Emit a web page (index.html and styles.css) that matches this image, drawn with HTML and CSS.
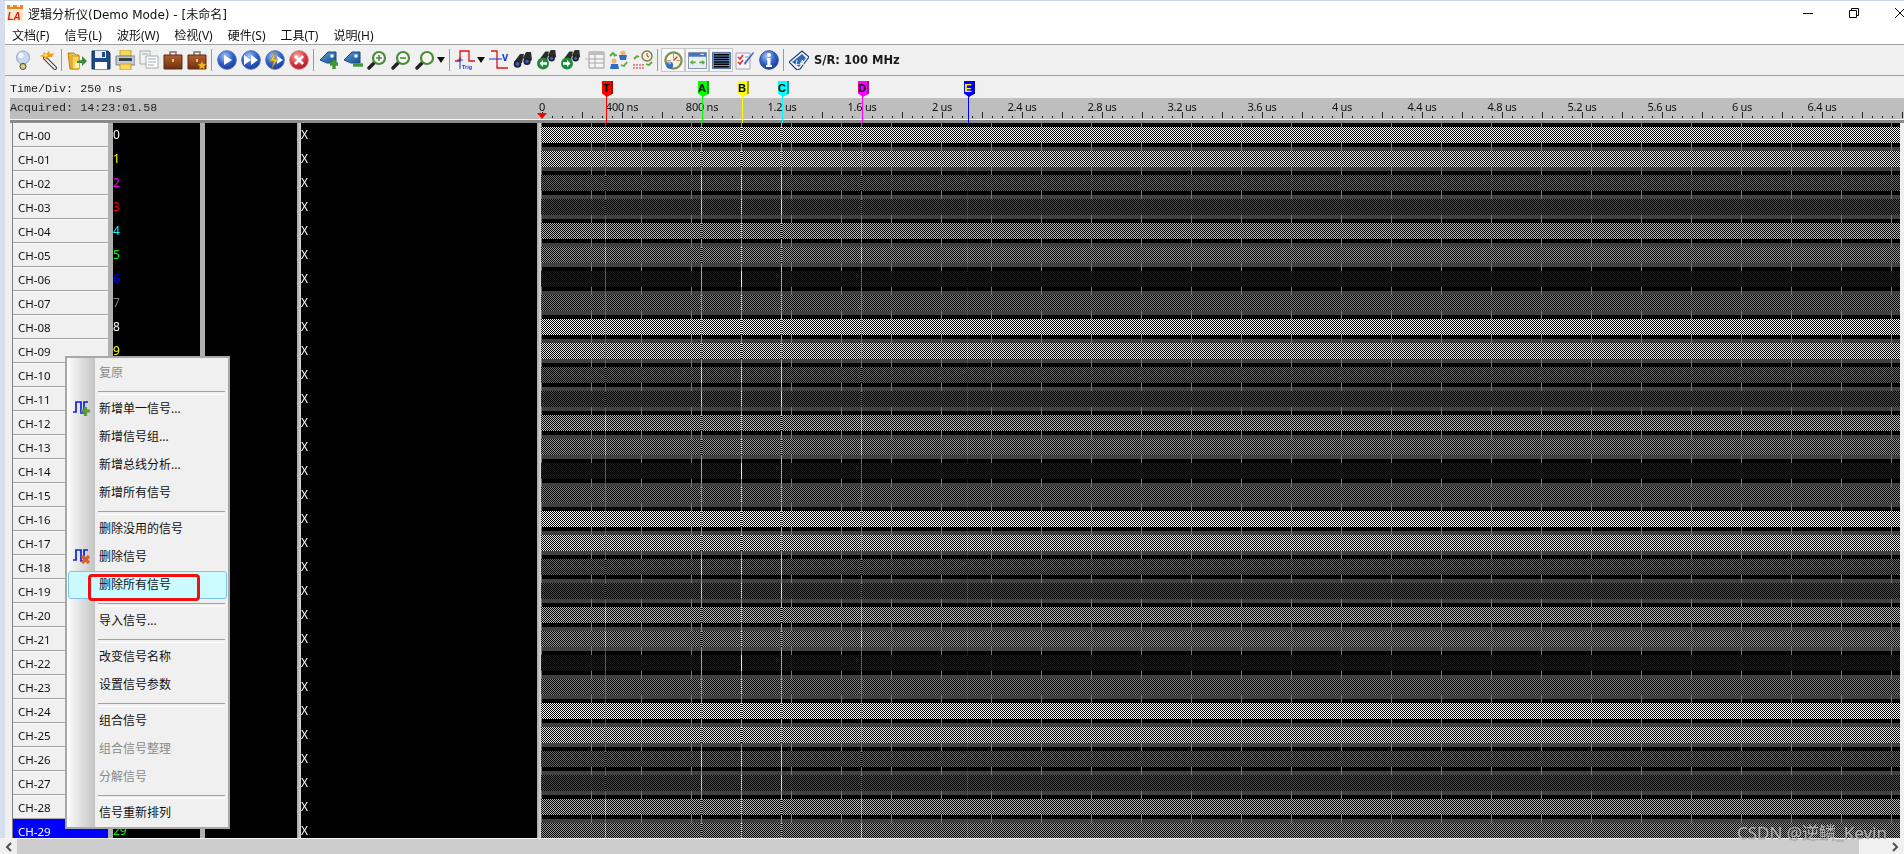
FILE: index.html
```html
<!DOCTYPE html>
<html lang="zh-CN">
<head>
<meta charset="utf-8">
<title>逻辑分析仪</title>
<link rel="stylesheet" href="styles.css">
</head>
<body>
<svg class="defs" width="0" height="0" aria-hidden="true">
  <defs>
    <radialGradient id="gBlue" cx="40%" cy="30%" r="75%"><stop offset="0" stop-color="#a9c8f5"/><stop offset=".55" stop-color="#2f62c9"/><stop offset="1" stop-color="#16358f"/></radialGradient>
    <radialGradient id="gRed" cx="40%" cy="30%" r="75%"><stop offset="0" stop-color="#f4b4b4"/><stop offset=".6" stop-color="#d8333c"/><stop offset="1" stop-color="#9c1d24"/></radialGradient>
    <linearGradient id="gBrown" x1="0" y1="0" x2="0" y2="1"><stop offset="0" stop-color="#b5602f"/><stop offset="1" stop-color="#6d3012"/></linearGradient>
    <linearGradient id="gFolder" x1="0" y1="0" x2="1" y2="0"><stop offset="0" stop-color="#e8a818"/><stop offset="1" stop-color="#ffe27a"/></linearGradient>
    <linearGradient id="gTag" x1="0" y1="0" x2="1" y2="1"><stop offset="0" stop-color="#5f9bd8"/><stop offset="1" stop-color="#14508f"/></linearGradient>

    <symbol id="i-logo" viewBox="0 0 16 16"><rect width="16" height="16" fill="#f6e7c8"/><path d="M0 0h3v2h3V0h4v2h3V0h3v4H0z" fill="#e8862a"/><text x="0.5" y="14.5" class="logo-text">LA</text></symbol>
    <symbol id="i-bulb" viewBox="0 0 20 20"><circle cx="10" cy="7.5" r="6.5" fill="#c8d8ee" stroke="#8fa6c6"/><circle cx="8" cy="5.5" r="2.6" fill="#f4f8ff"/><path d="M7.5 13h5v3h-5z" fill="#b9ad72"/><circle cx="10" cy="16.5" r="3" fill="#d8cf8f" stroke="#4a4528"/></symbol>
    <symbol id="i-wand" viewBox="0 0 20 20"><path d="M8 8l10 10" stroke="#444" stroke-width="4" stroke-linecap="round"/><path d="M8 8l10 10" stroke="#f0f0f0" stroke-width="2" stroke-linecap="round"/><path d="M2 6l4-1 1-3 2 2 3-3 1 3 4-1-2 4-4 0-2 3-2-3z" fill="#f39a1d"/><path d="M6 5l3-1 2 1-2 2z" fill="#ffe070"/></symbol>
    <symbol id="i-folder" viewBox="0 0 20 20"><path d="M1 3h6l2 2h3v14H3z" fill="url(#gFolder)" stroke="#b98310"/><path d="M5 6h7v13H5z" fill="#ffd45e" stroke="#c89a1d"/><path d="M10 11l5-1V6l5 5-5 5v-3h-5z" fill="#3f8a3a"/><path d="M8 13h4v5H8z" fill="#fff2b0"/></symbol>
    <symbol id="i-save" viewBox="0 0 20 20"><path d="M1 1h16l2 2v16H1z" fill="#1f4a86" stroke="#12305c"/><path d="M4 1h11v7H4z" fill="#e8eef6"/><path d="M11 2h3v5h-3z" fill="#1f4a86"/><path d="M4 12h12v7H4z" fill="#fff"/></symbol>
    <symbol id="i-print" viewBox="0 0 20 20"><path d="M5 0h11v6H5z" fill="#f6d860" stroke="#c8a22c"/><path d="M1 6h19v9H1z" fill="#c4c8cf" stroke="#7d828a"/><path d="M4 8h13v3H4z" fill="#3b3f46"/><path d="M5 14h11v6H5z" fill="#f6d860" stroke="#c8a22c"/></symbol>
    <symbol id="i-copy" viewBox="0 0 20 20"><path d="M1 1h10v13H1z" fill="#f2f2f2" stroke="#a8a8a8"/><path d="M7 6h12v12H7z" fill="#fff" stroke="#a8a8a8"/><path d="M9 9h8M9 12h8M9 15h6M3 4h6" stroke="#9aa8bc"/></symbol>
    <symbol id="i-case" viewBox="0 0 20 20"><path d="M7 5V2h6v3" fill="none" stroke="#777" stroke-width="1.5"/><path d="M1 5h18v14H1z" fill="url(#gBrown)" stroke="#5b2a10"/><path d="M9 9h2v3H9z" fill="#e8c070"/></symbol>
    <symbol id="i-casestar" viewBox="0 0 20 20"><use href="#i-case" width="20" height="20"/><path d="M15 11l1.3 2.8 3 .4-2.2 2 .6 3-2.7-1.5-2.700 1.500.6-3-2.200-2 3-.4z" fill="#f5b21a" stroke="#b97c08" stroke-width=".4"/></symbol>
    <symbol id="i-play" viewBox="0 0 20 20"><circle cx="10" cy="10" r="9.300" fill="url(#gBlue)" stroke="#4a70bd"/><path d="M7 5l8 5-8 5z" fill="#fff"/></symbol>
    <symbol id="i-ff" viewBox="0 0 20 20"><circle cx="10" cy="10" r="9.300" fill="url(#gBlue)" stroke="#4a70bd"/><path d="M3 5l7 5-7 5zM10 5l7 5-7 5z" fill="#fff"/></symbol>
    <symbol id="i-bolt" viewBox="0 0 20 20"><circle cx="10" cy="10" r="9.300" fill="url(#gBlue)" stroke="#4a70bd"/><path d="M12 6l6 4-6 4z" fill="#fff"/><path d="M10 2L5 11h4l-2 7 6-9H9z" fill="#f5c518" stroke="#a87c05" stroke-width=".5"/></symbol>
    <symbol id="i-stop" viewBox="0 0 20 20"><circle cx="10" cy="10" r="9.300" fill="url(#gRed)" stroke="#c77"/><path d="M6 6l8 8M14 6l-8 8" stroke="#fff" stroke-width="2.800"/></symbol>
    <symbol id="i-tagplus" viewBox="0 0 20 20"><path d="M1 10L9 2h8v11H8z" fill="url(#gTag)" stroke="#124a84"/><circle cx="13" cy="6" r="1.800" fill="#fff"/><path d="M11 14h8M15 10v9" stroke="#3f9a36" stroke-width="3.400"/></symbol>
    <symbol id="i-tagminus" viewBox="0 0 20 20"><path d="M1 10L9 2h8v11H8z" fill="url(#gTag)" stroke="#124a84"/><circle cx="13" cy="6" r="1.800" fill="#fff"/><path d="M10 15h10" stroke="#3f9a36" stroke-width="3.400"/></symbol>
    <symbol id="i-zplus" viewBox="0 0 20 20"><path d="M2 18l6-6" stroke="#222" stroke-width="3.400" stroke-linecap="round"/><circle cx="12" cy="8" r="6" fill="#f6f8f4" stroke="#4d8a3d" stroke-width="2.200"/><path d="M9 8h6M12 5v6" stroke="#4d8a3d" stroke-width="1.600"/></symbol>
    <symbol id="i-zminus" viewBox="0 0 20 20"><path d="M2 18l6-6" stroke="#222" stroke-width="3.400" stroke-linecap="round"/><circle cx="12" cy="8" r="6" fill="#f6f8f4" stroke="#4d8a3d" stroke-width="2.200"/><path d="M9 8h6" stroke="#4d8a3d" stroke-width="1.600"/></symbol>
    <symbol id="i-zfit" viewBox="0 0 20 20"><path d="M2 18l6-6" stroke="#222" stroke-width="3.400" stroke-linecap="round"/><circle cx="12" cy="8" r="6" fill="#f6f8f4" stroke="#4d8a3d" stroke-width="2.200"/></symbol>
    <symbol id="i-down" viewBox="0 0 8 6"><path d="M0 0h8L4 6z" fill="#111"/></symbol>
    <symbol id="i-trig" viewBox="0 0 20 20"><path d="M0 11h5V1h9v10h6" fill="none" stroke="#e81010" stroke-width="1.300"/><path d="M5 7v12M2 10h6" stroke="#1a30e0"/><text x="7" y="19" class="trig-text">Trig</text></symbol>
    <symbol id="i-trigv" viewBox="0 0 20 20"><path d="M2 1h6v17h11" fill="none" stroke="#e81010" stroke-width="1.300"/><path d="M0 9h13" stroke="#1a30e0"/><text x="13" y="11" class="trigv-text">V</text></symbol>
    <symbol id="i-binoc" viewBox="0 0 20 20"><path d="M1 12L7 4h4l-2 9z" fill="#2b2b2b"/><path d="M10 8l3-6h5l1 8-5 3z" fill="#2b2b2b"/><ellipse cx="4.500" cy="14" rx="3.800" ry="3.800" fill="#222"/><ellipse cx="14" cy="11.500" rx="3.600" ry="3.600" fill="#222"/><ellipse cx="4.500" cy="14" rx="2" ry="2" fill="#2d62c4"/><ellipse cx="14" cy="11.500" rx="1.800" ry="1.800" fill="#2d62c4"/></symbol>
    <symbol id="i-binl" viewBox="0 0 20 20"><use href="#i-binoc" x="2" y="-2" width="18" height="18"/><circle cx="6" cy="13.500" r="6" fill="#1f8a3c"/><path d="M2.500 13.500l3.500-3.500v2.200h4v2.600H6V17z" fill="#fff"/></symbol>
    <symbol id="i-binr" viewBox="0 0 20 20"><use href="#i-binoc" x="2" y="-2" width="18" height="18"/><circle cx="6" cy="13.500" r="6" fill="#1f8a3c"/><path d="M9.500 13.500L6 10v2.200H2v2.600h4V17z" fill="#fff"/></symbol>
    <symbol id="i-table" viewBox="0 0 20 20"><path d="M4 2h15v16H4z" fill="#f4f4f4" stroke="#9a9a9a"/><path d="M4 2h15v3H4z" fill="#bdbdbd"/><path d="M4 9h15M4 13h15M10 5v13" stroke="#a8a8a8"/><path d="M0 9h3" stroke="#b8b8b8"/></symbol>
    <symbol id="i-people" viewBox="0 0 20 20"><circle cx="14" cy="3" r="2.600" fill="#efb27a"/><path d="M10 5h8l-1 5h-6z" fill="#2f6cc4"/><circle cx="5" cy="11" r="2.600" fill="#efb27a"/><path d="M1 19l1-5h7l1 5z" fill="#2f6cc4"/><path d="M1 6l3-3 2 2-1 1 3-1M12 15l3 1 3-4" fill="none" stroke="#5aa63a" stroke-width="1.800"/></symbol>
    <symbol id="i-clock" viewBox="0 0 20 20"><circle cx="14" cy="6" r="5" fill="#f4efdc" stroke="#7d7a45" stroke-width="1.400"/><path d="M14 3v3l2 1" stroke="#b33" fill="none"/><path d="M1 9l3-3 2 1M13 14l3 1 3-3" fill="none" stroke="#5aa63a" stroke-width="1.800"/><path d="M0 15h11M0 18h11" stroke="#d22" stroke-dasharray="2 1" stroke-width="1.200"/></symbol>
    <symbol id="i-compass" viewBox="0 0 20 20"><circle cx="10" cy="10" r="8.500" fill="#f5f3e4" stroke="#7e8f54" stroke-width="2.400"/><path d="M10 3v5M3 10h4M13 10h4" stroke="#c84"/><path d="M10 10l4-4" stroke="#c33" stroke-width="1.400"/><circle cx="6" cy="15" r="3.600" fill="#2f6cc4"/><circle cx="6" cy="12.800" r="1.400" fill="#8fbcf0"/></symbol>
    <symbol id="i-win" viewBox="0 0 20 20"><path d="M.5 1.500h19v17H.5z" fill="#e8eef0" stroke="#7d8ea8"/><path d="M1 2h18v4H1z" fill="#4a6fc8"/><path d="M13 3.500h4" stroke="#fff"/><path d="M2 12l3-2.500v1.500h3v2H5v1.500zM18 12l-3-2.500v1.500h-3v2h3v1.500z" fill="#5aa63a"/></symbol>
    <symbol id="i-lines" viewBox="0 0 20 20"><path d="M.5 1.500h19v17H.5z" fill="#6d92c8" stroke="#4a6fa8"/><path d="M2 4h16M2 6.500h16M2 9h16M2 11.500h16M2 14h16M2 16.500h16" stroke="#000" stroke-width="1.500"/></symbol>
    <symbol id="i-check" viewBox="0 0 20 20"><path d="M1 3h14v16H1z" fill="#f4f4f8" stroke="#a4a4b4"/><path d="M3 7l2 2 3-4M3 12l2 2 3-4" fill="none" stroke="#d8302c" stroke-width="1.600"/><path d="M9 13L18 2l1 1L10 15z" fill="#3f66c4"/><path d="M10 7h4M10 11h2" stroke="#8894b4"/></symbol>
    <symbol id="i-info" viewBox="0 0 20 20"><circle cx="10" cy="10" r="9.300" fill="url(#gBlue)" stroke="#2a4aa0"/><circle cx="10" cy="5" r="2" fill="#fff"/><path d="M8 8h3.500v7H13v2H7v-2h1.300v-5H8z" fill="#fff"/></symbol>
    <symbol id="i-card" viewBox="0 0 20 20"><path d="M0 12L13 1l7 6-9 12-3 1z" fill="#f4f8fc" stroke="#1f3f74" stroke-width="1.200"/><path d="M3 12L13 4l4 4-7 9z" fill="#2d68b8"/><text x="6.500" y="14.500" class="card-text">LA</text></symbol>
    <symbol id="i-addsig" viewBox="0 0 18 16"><path d="M0 12h3V2h5v11h3V2h4" fill="none" stroke="#1020d8" stroke-width="1.700"/><path d="M8 11h9M12.500 7v9" stroke="#5a9a3c" stroke-width="3.200"/></symbol>
    <symbol id="i-delsig" viewBox="0 0 18 16"><path d="M0 12h3V2h5v11h3V2h4" fill="none" stroke="#1020d8" stroke-width="1.700"/><path d="M9 8l7 7M16 8l-7 7" stroke="#d8602c" stroke-width="3.200"/></symbol>
  </defs>
</svg>

<div class="frame">
  <header class="titlebar">
    <svg class="logo"><use href="#i-logo"/></svg>
    <span class="title">逻辑分析仪(Demo Mode) - [未命名]</span>
    <div class="win-btns">
      <svg class="win-btn" viewBox="0 0 10 10"><path d="M0 5.500h10" stroke="#000"/></svg>
      <svg class="win-btn" viewBox="0 0 10 10"><path d="M.5 2.500h7v7h-7zM2.500 2.500v-2h7v7h-2" fill="none" stroke="#000"/></svg>
      <svg class="win-btn" viewBox="0 0 10 10"><path d="M0 0l10 10M10 0L0 10" stroke="#000"/></svg>
    </div>
  </header>
  <nav class="menubar">
    <span>文档(F)</span><span>信号(L)</span><span>波形(W)</span><span>检视(V)</span><span>硬件(S)</span><span>工具(T)</span><span>说明(H)</span>
  </nav>
  <div class="toolbar">
    <span class="tool"><svg><use href="#i-bulb"/></svg></span>
    <span class="tool"><svg><use href="#i-wand"/></svg></span>
    <span class="sep"></span>
    <span class="tool"><svg><use href="#i-folder"/></svg></span>
    <span class="tool"><svg><use href="#i-save"/></svg></span>
    <span class="tool"><svg><use href="#i-print"/></svg></span>
    <span class="tool"><svg><use href="#i-copy"/></svg></span>
    <span class="tool"><svg><use href="#i-case"/></svg></span>
    <span class="tool"><svg><use href="#i-casestar"/></svg></span>
    <span class="sep"></span>
    <span class="tool"><svg><use href="#i-play"/></svg></span>
    <span class="tool"><svg><use href="#i-ff"/></svg></span>
    <span class="tool"><svg><use href="#i-bolt"/></svg></span>
    <span class="tool"><svg><use href="#i-stop"/></svg></span>
    <span class="sep"></span>
    <span class="tool"><svg><use href="#i-tagplus"/></svg></span>
    <span class="tool"><svg><use href="#i-tagminus"/></svg></span>
    <span class="tool"><svg><use href="#i-zplus"/></svg></span>
    <span class="tool"><svg><use href="#i-zminus"/></svg></span>
    <span class="tool"><svg><use href="#i-zfit"/></svg></span>
    <span class="drop"><svg><use href="#i-down"/></svg></span>
    <span class="sep"></span>
    <span class="tool"><svg><use href="#i-trig"/></svg></span>
    <span class="drop"><svg><use href="#i-down"/></svg></span>
    <span class="tool"><svg><use href="#i-trigv"/></svg></span>
    <span class="tool"><svg><use href="#i-binoc"/></svg></span>
    <span class="tool"><svg><use href="#i-binl"/></svg></span>
    <span class="tool"><svg><use href="#i-binr"/></svg></span>
    <span class="tool"><svg><use href="#i-table"/></svg></span>
    <span class="tool"><svg><use href="#i-people"/></svg></span>
    <span class="tool"><svg><use href="#i-clock"/></svg></span>
    <span class="sep"></span>
    <span class="tool on"><svg><use href="#i-compass"/></svg></span>
    <span class="tool on"><svg><use href="#i-win"/></svg></span>
    <span class="tool on"><svg><use href="#i-lines"/></svg></span>
    <span class="tool"><svg><use href="#i-check"/></svg></span>
    <span class="tool"><svg><use href="#i-info"/></svg></span>
    <span class="sep"></span>
    <span class="tool"><svg><use href="#i-card"/></svg></span>
    <span class="rate">S/R: 100 MHz</span>
  </div>
  <div class="timebar">Time/Div: 250 ns</div>
  <div class="rulerbar">
    <div class="acquired">Acquired: 14:23:01.58</div>
    <div class="scale">
      <span>0</span><span>400 ns</span><span>800 ns</span><span>1.2 us</span><span>1.6 us</span><span>2 us</span><span>2.4 us</span><span>2.8 us</span><span>3.2 us</span><span>3.6 us</span><span>4 us</span><span>4.4 us</span><span>4.8 us</span><span>5.2 us</span><span>5.6 us</span><span>6 us</span><span>6.4 us</span>
    </div>
    <div class="ticks"></div>
    <div class="origin"></div>
  </div>
  <div class="ruler-edge"></div>
  <main class="panes">
    <div class="names">
      <div class="name">CH-00</div><div class="name">CH-01</div><div class="name">CH-02</div><div class="name">CH-03</div><div class="name">CH-04</div><div class="name">CH-05</div><div class="name">CH-06</div><div class="name">CH-07</div><div class="name">CH-08</div><div class="name">CH-09</div>
      <div class="name">CH-10</div><div class="name">CH-11</div><div class="name">CH-12</div><div class="name">CH-13</div><div class="name">CH-14</div><div class="name">CH-15</div><div class="name">CH-16</div><div class="name">CH-17</div><div class="name">CH-18</div><div class="name">CH-19</div>
      <div class="name">CH-20</div><div class="name">CH-21</div><div class="name">CH-22</div><div class="name">CH-23</div><div class="name">CH-24</div><div class="name">CH-25</div><div class="name">CH-26</div><div class="name">CH-27</div><div class="name">CH-28</div><div class="name selected">CH-29</div>
    </div>
    <div class="splitter"></div>
    <div class="col col-num">
      <div class="c0">0</div><div class="c1">1</div><div class="c2">2</div><div class="c3">3</div><div class="c4">4</div><div class="c5">5</div><div class="c6">6</div><div class="c7">7</div>
      <div class="c0">8</div><div class="c1">9</div><div class="c2">10</div><div class="c3">11</div><div class="c4">12</div><div class="c5">13</div><div class="c6">14</div><div class="c7">15</div>
      <div class="c0">16</div><div class="c1">17</div><div class="c2">18</div><div class="c3">19</div><div class="c4">20</div><div class="c5">21</div><div class="c6">22</div><div class="c7">23</div>
      <div class="c0">24</div><div class="c1">25</div><div class="c2">26</div><div class="c3">27</div><div class="c4">28</div><div class="c5">29</div>
    </div>
    <div class="splitter"></div>
    <div class="col col-blank"></div>
    <div class="splitter thin"></div>
    <div class="col col-x">
      <div>X</div><div>X</div><div>X</div><div>X</div><div>X</div><div>X</div><div>X</div><div>X</div><div>X</div><div>X</div>
      <div>X</div><div>X</div><div>X</div><div>X</div><div>X</div><div>X</div><div>X</div><div>X</div><div>X</div><div>X</div>
      <div>X</div><div>X</div><div>X</div><div>X</div><div>X</div><div>X</div><div>X</div><div>X</div><div>X</div><div>X</div>
    </div>
    <div class="splitter thin"></div>
    <div class="waves">
      <div class="band c0"></div><div class="band c1"></div><div class="band c2"></div><div class="band c3"></div><div class="band c4"></div><div class="band c5"></div><div class="band c6"></div><div class="band c7"></div>
      <div class="band c0"></div><div class="band c1"></div><div class="band c2"></div><div class="band c3"></div><div class="band c4"></div><div class="band c5"></div><div class="band c6"></div><div class="band c7"></div>
      <div class="band c0"></div><div class="band c1"></div><div class="band c2"></div><div class="band c3"></div><div class="band c4"></div><div class="band c5"></div><div class="band c6"></div><div class="band c7"></div>
      <div class="band c0"></div><div class="band c1"></div><div class="band c2"></div><div class="band c3"></div><div class="band c4"></div><div class="band c5"></div>
      <i class="cursor cur-t"></i><i class="cursor cur-a"></i><i class="cursor cur-b"></i><i class="cursor cur-c"></i><i class="cursor cur-d"></i><i class="cursor cur-e"></i>
    </div>
    <div class="edge"></div>
  </main>
</div>
<div class="scrollbar">
  <span class="sb-btn"><svg viewBox="0 0 8 10"><path d="M6 1L2 5l4 4" fill="none" stroke="#505050" stroke-width="2"/></svg></span>
  <span class="sb-track"></span>
  <span class="sb-btn right"><svg viewBox="0 0 8 10"><path d="M2 1l4 4-4 4" fill="none" stroke="#505050" stroke-width="2"/></svg></span>
</div>

<i class="stem s-t"></i><i class="stem s-a"></i><i class="stem s-b"></i><i class="stem s-c"></i><i class="stem s-d"></i><i class="stem s-e"></i>
<div class="flag f-t">T</div><div class="flag f-a">A</div><div class="flag f-b">B</div><div class="flag f-c">C</div><div class="flag f-d">D</div><div class="flag f-e">E</div>

<div class="menu">
  <div class="item off"><span class="slot"></span>复原</div>
  <div class="msep"></div>
  <div class="item"><span class="slot"><svg><use href="#i-addsig"/></svg></span>新增单一信号...</div>
  <div class="item"><span class="slot"></span>新增信号组...</div>
  <div class="item"><span class="slot"></span>新增总线分析...</div>
  <div class="item"><span class="slot"></span>新增所有信号</div>
  <div class="msep"></div>
  <div class="item"><span class="slot"></span>删除没用的信号</div>
  <div class="item"><span class="slot"><svg><use href="#i-delsig"/></svg></span>删除信号</div>
  <div class="item hot"><span class="slot"></span>删除所有信号</div>
  <div class="msep"></div>
  <div class="item"><span class="slot"></span>导入信号...</div>
  <div class="msep"></div>
  <div class="item"><span class="slot"></span>改变信号名称</div>
  <div class="item"><span class="slot"></span>设置信号参数</div>
  <div class="msep"></div>
  <div class="item"><span class="slot"></span>组合信号</div>
  <div class="item off"><span class="slot"></span>组合信号整理</div>
  <div class="item off"><span class="slot"></span>分解信号</div>
  <div class="msep"></div>
  <div class="item"><span class="slot"></span>信号重新排列</div>
</div>
<div class="redbox"></div>
<div class="watermark">CSDN @逆鳞_Kevin</div>
</body>
</html>
```

FILE: styles.css
```css
* { box-sizing: border-box; }
html, body { margin: 0; height: 100%; }
body {
  position: relative;
  width: 1904px;
  height: 854px;
  overflow: hidden;
  background: #f0f0f0;
  color: #000;
  font: 12px "Noto Sans", "Noto Sans CJK SC", sans-serif;
}
.defs { position: absolute; }
.logo-text { font: italic bold 10px "Liberation Sans", sans-serif; fill: #d8231c; }
.trig-text { font: bold 5.5px "Liberation Sans", sans-serif; fill: #1a30e0; }
.trigv-text { font: bold 8px "DejaVu Sans", sans-serif; fill: #1a30e0; }
.card-text { font: italic bold 6.5px "Liberation Sans", sans-serif; fill: #fff; }

.frame {
  display: flex;
  flex-direction: column;
  height: 838px;
  border-left: 5px solid #d5dfee;
  border-top: 1px solid #c9d5e8;
}
.titlebar {
  display: flex;
  align-items: center;
  height: 24px;
  background: #fff;
  padding-left: 2px;
  flex: none;
}
.logo { width: 16px; height: 16px; margin-right: 5px; }
.title { font: 12px "DejaVu Sans", "Noto Sans CJK SC", sans-serif; color: #111; }
.win-btns { display: flex; margin-left: auto; align-items: center; }
.win-btn { width: 10px; height: 10px; margin-right: 36px; overflow: visible; }
.win-btn:last-child { margin-right: -1px; }
.menubar {
  display: flex;
  gap: 15px;
  height: 19px;
  flex: none;
  align-items: center;
  padding-left: 7px;
  background: #fff;
  font-size: 12px;
  color: #111;
}
.toolbar {
  display: flex;
  align-items: center;
  flex: none;
  height: 32px;
  padding-left: 6px;
  border-top: 1px solid #a0a0a0;
  border-bottom: 1px solid #a0a0a0;
  background: #f0f0f0;
}
.tool { display: flex; align-items: center; justify-content: center; width: 24px; height: 24px; flex: none; }
.tool svg { width: 20px; height: 20px; }
.tool.on { background: #f8f8f8; border: 1px solid #c8c8c8; }
.tool.on svg { width: 19px; height: 19px; }
.drop { display: flex; width: 10px; flex: none; }
.drop svg { width: 8px; height: 6px; }
.sep { position: relative; width: 6px; height: 22px; flex: none; }
.sep::before { content: ""; display: block; width: 1px; height: 22px; margin-left: 2px; background: #9a9a9a; }
.rate { margin-left: 3px; font: bold 11.500px "DejaVu Sans", sans-serif; color: #1a1a1a; white-space: nowrap; }

.timebar {
  flex: none;
  height: 22px;
  padding: 5px 0 0 5px;
  font: 11.700px/16px "Liberation Mono", monospace;
  color: #222;
}
.rulerbar {
  position: relative;
  display: flex;
  flex: none;
  height: 21px;
  margin-left: 5px;
  background: #bebebe;
}
.acquired {
  width: 492px;
  flex: none;
  padding-top: 2px;
  font: 11.700px/16px "Liberation Mono", monospace;
  color: #222;
}
.scale { display: flex; flex: none; }
.scale span { width: 80px; flex: none; text-align: center; font-size: 11px; line-height: 17px; letter-spacing: -.25px; color: #111; white-space: nowrap; }
.ticks {
  position: absolute;
  left: 532px;
  right: 0;
  bottom: 1px;
  height: 6px;
  background:
    repeating-linear-gradient(90deg, #222 0 1px, transparent 1px 40px) 0 0 / 100% 6px no-repeat,
    repeating-linear-gradient(90deg, #222 0 1px, transparent 1px 10px) 0 4px / 100% 2px no-repeat;
}
.origin {
  position: absolute;
  left: 527px;
  bottom: 0;
  width: 0;
  height: 0;
  border: 5.500px solid transparent;
  border-top: 6px solid #f00;
  border-bottom: 0;
}
.ruler-edge {
  flex: none;
  height: 4px;
  margin-left: 5px;
  background: linear-gradient(#f8f8f8 0 1px, #8a8a8a 1px);
}

.panes {
  display: flex;
  flex: 1;
  min-height: 0;
  overflow: hidden;
  padding-left: 7px;
  background: #f0f0f0;
}
.names { width: 96px; flex: none; border-left: 1px solid #808080; }
.name {
  height: 24px;
  padding-left: 5px;
  line-height: 23px;
  font-size: 11.500px;
  color: #111;
  background: #f0f0f0;
  border-bottom: 1px solid #a4a4a4;
  border-top: 1px solid #fafafa;
}
.name.selected { background: #00f; color: #fff; border-color: #00f; }
.splitter { width: 5px; flex: none; background: #b0b0b0; }
.splitter.thin { width: 4px; background: linear-gradient(90deg, #a8a8a8, #d8d8d8); }
.col { flex: none; background: #000; color: #fff; font-size: 12px; line-height: 24px; }
.col-num { width: 87px; }
.col-blank { width: 92px; }
.col-x { width: 236px; }
.col-num .c0 { color: #fff; }
.col-num .c1 { color: #ff0; }
.col-num .c2 { color: #f0f; }
.col-num .c3 { color: #f00; }
.col-num .c4 { color: #0ff; }
.col-num .c5 { color: #0f0; }
.col-num .c6 { color: #00f; }
.col-num .c7 { color: #808080; }

.waves {
  position: relative;
  width: 1359px;
  flex: none;
  padding-top: 4px;
  overflow: hidden;
  background:
    repeating-linear-gradient(90deg, #18a0a0 0 1px, transparent 1px 50px),
    repeating-linear-gradient(#000 0 24px, #404040 24px 48px);
}
.waves::after {
  content: "";
  position: absolute;
  inset: 0;
  background: repeating-linear-gradient(90deg, rgba(0, 170, 170, .1) 0 1px, transparent 1px 50px);
}
.band {
  height: 16px;
  margin-bottom: 8px;
  background: repeating-conic-gradient(var(--c) 0 25%, #000 0 50%) 0 0 / 2px 2px;
}
.band.c0 { --c: #fff; }
.band.c1 { --c: #ff0; }
.band.c2 { --c: #f0f; }
.band.c3 { --c: #f00; }
.band.c4 { --c: #0ff; }
.band.c5 { --c: #0f0; }
.band.c6 { --c: #00f; }
.band.c7 { --c: #808080; }
.edge { flex: 1; background: #f0f0f0; }

.cursor {
  position: absolute;
  top: 0;
  bottom: 0;
  z-index: 2;
  width: 1px;
  mix-blend-mode: difference;
}
.cur-t { left: 64px; background: #f00; }
.cur-a { left: 160px; background: #0f0; }
.cur-b { left: 200px; background: #ff0; }
.cur-c { left: 240px; background: #0ff; }
.cur-d { left: 320px; background: #f0f; }
.cur-e { left: 426px; background: #00f; }

.stem {
  position: absolute;
  top: 96px;
  z-index: 3;
  width: 1px;
  height: 27px;
}
.s-t { left: 606px; background: #f00; }
.s-a { left: 702px; background: #0f0; }
.s-b { left: 742px; background: #ff0; }
.s-c { left: 782px; background: #0ff; }
.s-d { left: 862px; background: #f0f; }
.s-e { left: 968px; background: #00f; }

.flag {
  position: absolute;
  top: 81px;
  z-index: 4;
  width: 11px;
  height: 16px;
  padding-right: 1px;
  text-align: center;
  font: bold 11px/14px "Liberation Sans", sans-serif;
  color: #000;
  border-right: 2px solid var(--d);
  background: var(--f);
  clip-path: polygon(0 0, 100% 0, 100% 78%, 45% 100%, 0 78%);
}
.f-t { left: 602px; --f: #f00; --d: #a00000; }
.f-a { left: 698px; --f: #0f0; --d: #00a000; }
.f-b { left: 738px; --f: #ff0; --d: #a0a000; }
.f-c { left: 778px; --f: #0ff; --d: #00a0a0; }
.f-d { left: 858px; --f: #f0f; --d: #a000a0; }
.f-e { left: 964px; --f: #00f; --d: #0000a0; color: #ff0; }

.scrollbar { display: flex; height: 16px; border-top: 1px solid #f4f4f4; }
.sb-btn { display: flex; align-items: center; justify-content: center; width: 17px; flex: none; background: #f0f0f0; }
.sb-btn svg { width: 8px; height: 10px; }
.sb-btn.right { width: 45px; justify-content: flex-end; padding-right: 5px; }
.sb-track { flex: 1; background: #cdcdcd; }

.menu {
  position: absolute;
  left: 65px;
  top: 356px;
  z-index: 5;
  width: 165px;
  padding-top: 1px;
  border: 2px solid #a8a8a8;
  background: linear-gradient(90deg, #fdfdfd, #c4c4c4) 0 0 / 28px 100% no-repeat, #f0f0f0;
}
.item {
  display: flex;
  align-items: center;
  height: 28px;
  margin: 0 1px;
  padding-bottom: 2px;
  color: #111;
  border: 1px solid transparent;
  border-radius: 3px;
  white-space: nowrap;
}
.item.off { color: #8a8a8a; }
.item.hot { background: #ccfbff; border-color: #7cc4f0; }
.slot { display: flex; width: 30px; height: 16px; flex: none; padding-left: 4px; }
.slot svg { width: 18px; height: 16px; }
.msep { height: 8px; margin: 0 3px 0 31px; padding-top: 4px; }
.msep::before { content: ""; display: block; height: 2px; border-top: 1px solid #a0a0a0; border-bottom: 1px solid #fff; }
.redbox {
  position: absolute;
  left: 88px;
  top: 574px;
  z-index: 6;
  width: 112px;
  height: 27px;
  border: 3px solid #f01010;
  border-radius: 4px;
}
.watermark {
  position: absolute;
  left: 1737px;
  top: 822px;
  z-index: 7;
  font: 17px/22px "Noto Sans", "Noto Sans CJK SC", sans-serif;
  color: rgba(200, 200, 200, .85);
  text-shadow: 0 0 1px #444;
  white-space: nowrap;
}
```
